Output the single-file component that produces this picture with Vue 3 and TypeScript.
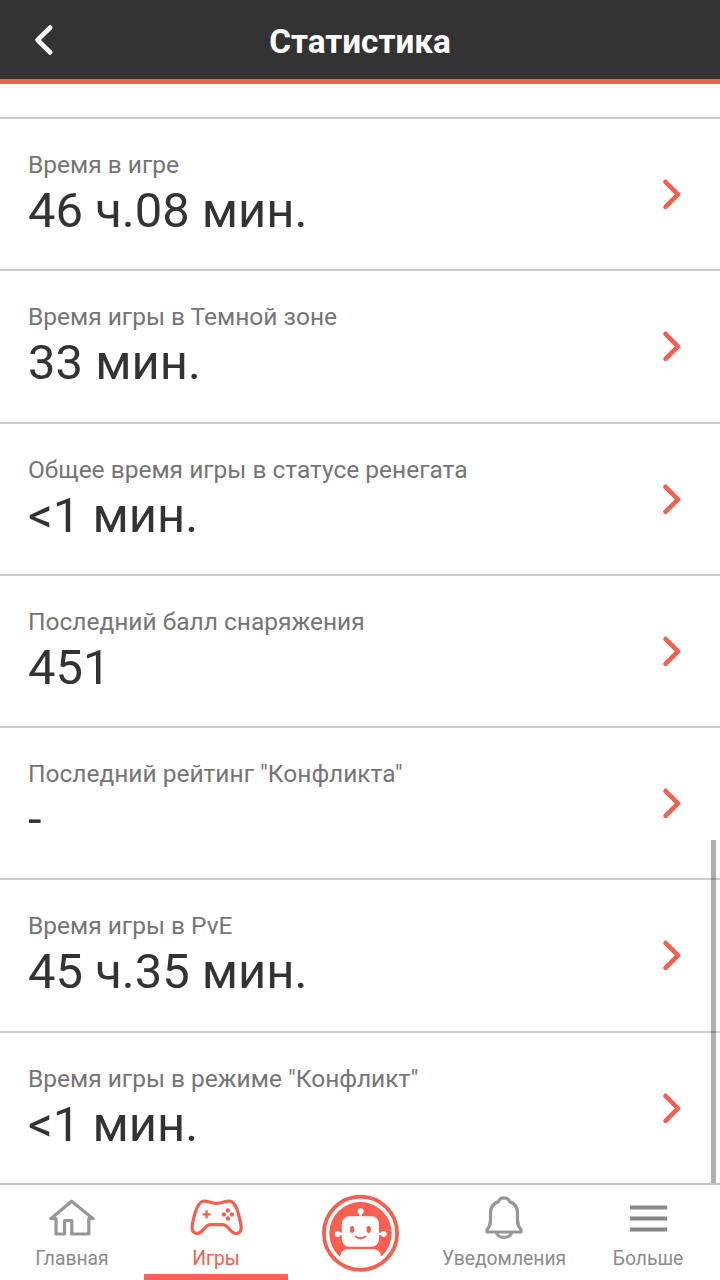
<script setup lang="ts">
interface Stat {
  label: string
  value: string
}

const stats: Stat[] = [
  { label: 'Время в игре', value: '46 ч.08 мин.' },
  { label: 'Время игры в Темной зоне', value: '33 мин.' },
  { label: 'Общее время игры в статусе ренегата', value: '<1 мин.' },
  { label: 'Последний балл снаряжения', value: '451' },
  { label: 'Последний рейтинг "Конфликта"', value: '-' },
  { label: 'Время игры в PvE', value: '45 ч.35 мин.' },
  { label: 'Время игры в режиме "Конфликт"', value: '<1 мин.' },
]
</script>

<template>
  <div class="screen">
    <header class="header">
      <svg class="back" width="24" height="36" viewBox="0 0 24 36">
        <path d="M18.3 5.5 L5.5 18 L18.3 30.5" />
      </svg>
      <h1 class="title">Статистика</h1>
    </header>

    <main class="content">
      <ul class="list">
        <li v-for="stat in stats" :key="stat.label" class="row">
          <div class="text">
            <div class="label">{{ stat.label }}</div>
            <div class="value">{{ stat.value }}</div>
          </div>
          <svg class="chevron" width="24" height="36" viewBox="0 0 24 36">
            <path d="M5.5 5.8 L18 18.3 L5.5 30.8" />
          </svg>
        </li>
      </ul>
      <div class="scrollbar"></div>
    </main>

    <nav class="nav">
      <a class="tab">
        <svg class="icon" width="60" height="48" viewBox="0 0 60 48">
          <path d="M8.8 29.7 L29.5 12.2 L51.2 29.7 H46.8 V45 H29.8 V31.5 H22.5 V45 H14 V29.7 Z" />
        </svg>
        <span>Главная</span>
      </a>
      <a class="tab active">
        <svg class="icon pad" width="60" height="48" viewBox="0 0 60 48">
          <path d="M17 12.3 C21.5 11.3 24 14.4 30.5 14.4 C37 14.4 39.5 11.3 44.5 12.3 C49.5 13.7 51.7 21 53.7 30 C55.7 38 56.2 43 51.5 44.4 C44 45.8 43.5 35.6 36.5 35.6 H25 C17.5 35.6 17 45.8 10 44.4 C5 43 5.500 38 7.500 30 C9.500 21 12 13.700 17 12.300 Z" />
          <path class="thin" d="M16.600 25.300 H24.600 M20.600 21.300 V29.300" />
          <g class="dots">
            <circle cx="41.900" cy="21.400" r="2.200" />
            <circle cx="41.900" cy="29.400" r="2.200" />
            <circle cx="37.900" cy="25.400" r="2.200" />
            <circle cx="45.900" cy="25.400" r="2.200" />
          </g>
        </svg>
        <span>Игры</span>
      </a>
      <a class="tab center">
        <svg width="80" height="80" viewBox="0 0 80 80">
          <defs>
            <clipPath id="disc"><circle cx="40.500" cy="40.300" r="33" /></clipPath>
          </defs>
          <circle class="ring" cx="40.500" cy="40.300" r="36.600" />
          <circle class="red" cx="40.500" cy="40.300" r="31.200" />
          <g clip-path="url(#disc)">
            <path class="white" d="M20.300 74 V64 C20.300 58.500 24 56 29 56 H52.500 C57.500 56 60.900 58.500 60.900 64 V74 Z" />
          </g>
          <rect class="white" x="21.800" y="23.200" width="37.200" height="30.600" rx="7.500" />
          <rect class="white" x="39.400" y="18" width="2.600" height="8" />
          <circle class="white" cx="40.700" cy="18.300" r="3" />
          <rect class="white" x="18" y="39.700" width="46" height="2.400" />
          <circle class="white" cx="17.700" cy="40.900" r="3" />
          <circle class="white" cx="63.700" cy="40.900" r="3" />
          <ellipse class="red" cx="32.100" cy="36.500" rx="2.200" ry="3.400" />
          <ellipse class="red" cx="48.700" cy="36.500" rx="2.200" ry="3.400" />
          <path class="smile" d="M35.500 43.500 Q40.500 46.900 45.500 43.500" />
        </svg>
      </a>
      <a class="tab">
        <svg class="icon" width="60" height="48" viewBox="0 0 60 48">
          <path d="M12.900 43 V41 C15.300 38 16.500 36 16.500 31 V24.500 C16.500 18.500 19 14.200 24.500 12.600 C26 7.600 34 7.600 35.500 12.600 C41 14.200 43.500 18.500 43.500 24.500 V31 C43.500 36 44.700 38 47.100 41 V43 Z" />
          <path d="M22.500 43.500 C24 50 36 50 37.500 43.500" />
        </svg>
        <span>Уведомления</span>
      </a>
      <a class="tab">
        <svg class="icon bars" width="60" height="48" viewBox="0 0 60 48">
          <path d="M12 18.500 H49.200 M12 29.500 H49.200 M12 40.500 H49.200" />
        </svg>
        <span>Больше</span>
      </a>
    </nav>
  </div>
</template>

<style>
html,
body {
  margin: 0;
  background: #fff;
}
</style>

<style scoped>
.screen {
  display: flex;
  flex-direction: column;
  width: 720px;
  height: 1280px;
  overflow: hidden;
  background: #fff;
  font-family: Roboto, "Liberation Sans", sans-serif;
  color: #333;
}
.header {
  display: grid;
  grid-template-columns: 88px 1fr 88px;
  align-items: center;
  flex: none;
  box-sizing: border-box;
  height: 84px;
  border-bottom: 5px solid #f4604f;
  background: #333;
}
.back {
  margin: 1px 0 0 32px;
}
.back path,
.chevron path {
  fill: none;
  stroke: #fff;
  stroke-width: 4.600px;
  stroke-linecap: round;
  stroke-linejoin: round;
}
.title {
  margin: 4px 0 0;
  color: #fff;
  font-size: 33.300px;
  font-weight: 700;
  line-height: 40px;
  text-align: center;
}
.content {
  position: relative;
  flex: none;
  height: 1099px;
}
.list {
  margin: 0;
  padding: 33px 0 0;
  list-style: none;
}
.row {
  display: flex;
  align-items: center;
  justify-content: space-between;
  box-sizing: border-box;
  height: 152.250px;
  padding: 0 36px 0 28px;
  border-top: 2px solid #ccc;
}
.text {
  padding-top: 3px;
}
.label {
  color: #757575;
  font-size: 24.500px;
  line-height: 28px;
}
.value {
  margin-top: 3px;
  font-size: 48.950px;
  line-height: 58px;
}
.chevron path {
  stroke: #f4604f;
}
.scrollbar {
  position: absolute;
  right: 4px;
  bottom: 0;
  width: 5px;
  height: 343px;
  background: rgba(0, 0, 0, 0.31);
}
.nav {
  display: grid;
  grid-template-columns: repeat(5, 1fr);
  flex: 1;
  border-top: 2px solid #c4c4c4;
  color: #8c8c8c;
}
.tab {
  display: flex;
  flex-direction: column;
  align-items: center;
  box-sizing: border-box;
  min-width: 0;
  font-size: 19.300px;
  line-height: 24px;
}
.icon {
  margin: 4.300px 0 9.700px;
  overflow: visible;
}
.icon path {
  fill: none;
  stroke: #979797;
  stroke-width: 3.200px;
  stroke-linejoin: round;
}
.active {
  border-bottom: 6px solid #ff604f;
  color: #f4604f;
}
.icon.pad path {
  stroke: #f4604f;
}
.icon.pad .thin {
  stroke-width: 2.300px;
}
.dots {
  fill: #f4604f;
}
.center {
  padding-top: 8px;
}
.ring {
  fill: #fff;
  stroke: #f4604f;
  stroke-width: 3.800px;
}
.red {
  fill: #f85f50;
}
.white {
  fill: #fff;
}
.smile {
  fill: none;
  stroke: #f85f50;
  stroke-width: 2px;
  stroke-linecap: round;
}
.icon.bars path {
  stroke: #888;
  stroke-width: 4px;
}
</style>
